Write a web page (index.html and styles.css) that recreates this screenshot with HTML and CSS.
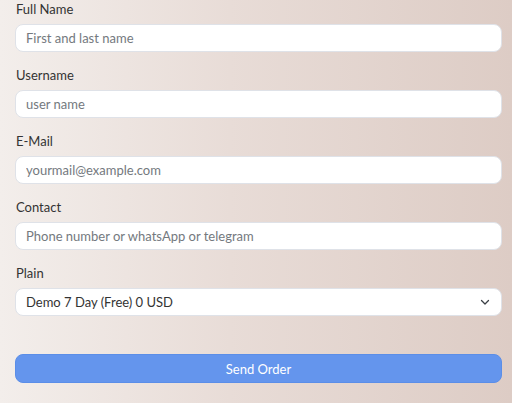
FILE: index.html
```html
<!DOCTYPE html>
<html>
<head>
<meta charset="utf-8">
<link rel="stylesheet" href="styles.css">
</head>
<body>
<form class="order-form">
  <div class="field">
    <label class="field-label">Full Name</label>
    <input class="field-input" type="text" placeholder="First and last name">
  </div>
  <div class="field">
    <label class="field-label">Username</label>
    <input class="field-input" type="text" placeholder="user name">
  </div>
  <div class="field">
    <label class="field-label">E-Mail</label>
    <input class="field-input" type="text" placeholder="yourmail@example.com">
  </div>
  <div class="field">
    <label class="field-label">Contact</label>
    <input class="field-input" type="text" placeholder="Phone number or whatsApp or telegram">
  </div>
  <div class="field">
    <label class="field-label">Plain</label>
    <div class="select-wrap">
      <select class="field-input field-select">
        <option>Demo 7 Day (Free) 0 USD</option>
      </select>
      <svg class="chevron" width="10" height="7" viewBox="0 0 10 7"><path d="M1.5 1.5 L5 5 L8.5 1.5" fill="none" stroke="#3a3f45" stroke-width="1.3" stroke-linecap="round" stroke-linejoin="round"/></svg>
    </div>
  </div>
  <button class="submit-btn" type="button">Send Order</button>
</form>
</body>
</html>
```
FILE: styles.css
```css
html, body {
  margin: 0;
  height: 100%;
}
body {
  background: linear-gradient(to right, #f3eeeb 0%, #e8dcd7 45%, #ddccc5 100%);
  font-family: Lato, "Noto Sans", sans-serif;
  color: #333;
  overflow: hidden;
}
.order-form {
  display: flex;
  flex-direction: column;
  padding: 0 10px 0 15px;
}
.field {
  display: flex;
  flex-direction: column;
  gap: 6px;
  margin-bottom: 14px;
}
.field-label {
  font-size: 13px;
  line-height: 18px;
  height: 18px;
  padding-left: 1px;
}
.field-input {
  box-sizing: border-box;
  height: 28px;
  width: 100%;
  margin: 0;
  border: 1px solid #dfe2e8;
  border-radius: 8px;
  background: #fff;
  padding: 0 10px;
  font-family: inherit;
  font-size: 13px;
  color: #333;
  outline: none;
}
.field-input::placeholder {
  color: #74797e;
}
.select-wrap {
  position: relative;
}
.field-select {
  appearance: none;
  -webkit-appearance: none;
}
.chevron {
  position: absolute;
  right: 12px;
  top: 11px;
}
.submit-btn {
  margin-top: 24px;
  height: 29px;
  border: 1px solid #5b8ee8;
  border-radius: 8px;
  background: #6495ed;
  color: #fff;
  font-family: inherit;
  font-size: 13px;
  padding: 0;
}
```
